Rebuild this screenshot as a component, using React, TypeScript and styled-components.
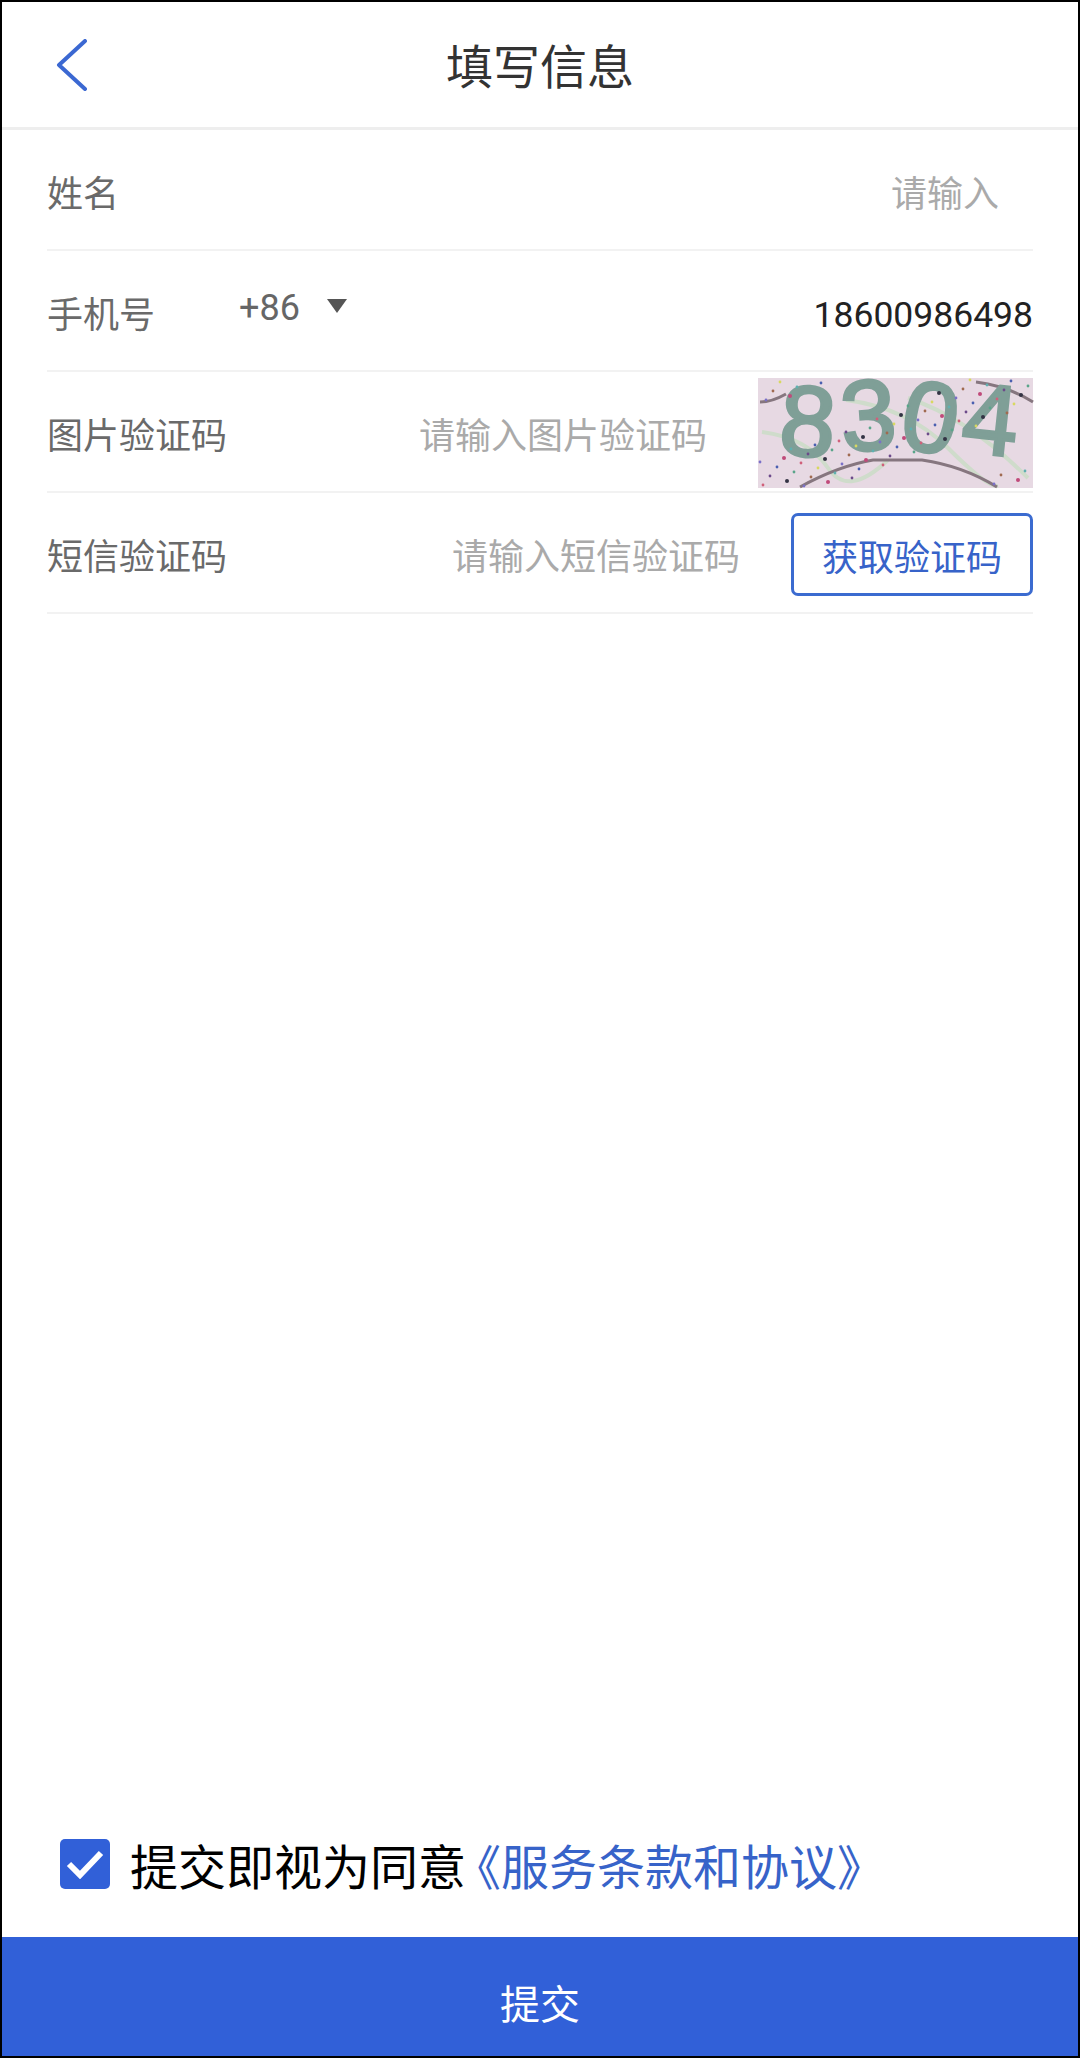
import React from "react";
import styled, { createGlobalStyle } from "styled-components";
import { FC } from "react";

const BLUE = "#3160d8";
const LINK = "#3763c9";

const GlobalStyle = createGlobalStyle`
  html, body {
    margin: 0;
    padding: 0;
    background: #fff;
  }
  * {
    box-sizing: border-box;
  }
`;

const Page = styled.div`
  width: 1080px;
  height: 2058px;
  border: 2px solid #000;
  background: #fff;
  display: flex;
  flex-direction: column;
  font-family: "Roboto", "Noto Sans CJK SC", sans-serif;
`;

const Header = styled.header`
  height: 128px;
  flex: none;
  display: grid;
  grid-template-columns: 1fr auto 1fr;
  align-items: center;
  padding: 0 53px;
  border-bottom: 3px solid #eeeeee;
`;

const BackButton = styled.button`
  border: none;
  background: none;
  padding: 0;
  width: 34px;
  height: 52px;
  cursor: pointer;
  svg {
    display: block;
  }
`;

const Title = styled.h1`
  margin: 0 0 3px;
  font-size: 47px;
  font-weight: 400;
  color: #333;
`;

const Form = styled.div`
  padding: 0 45px;
  display: flex;
  flex-direction: column;
`;

const Row = styled.div`
  height: 121px;
  flex: none;
  display: flex;
  align-items: center;
  border-bottom: 2px solid #f2f2f2;
  font-size: 36px;
`;

const Label = styled.span`
  color: #6a6a6a;
  padding-top: 3px;
  white-space: nowrap;
`;

const Code = styled.span`
  margin-left: 84px;
  display: flex;
  align-items: center;
  color: #666;
  font-size: 36px;
  margin-bottom: 6px;
`;

const Caret = styled.i`
  display: block;
  margin-left: 27px;
  margin-bottom: 4px;
  width: 0;
  height: 0;
  border-left: 10px solid transparent;
  border-right: 10px solid transparent;
  border-top: 14px solid #555;
`;

const Hint = styled.span<{ $gap: number }>`
  margin-left: auto;
  margin-right: ${props => props.$gap}px;
  padding-top: 3px;
  color: #aaaaaa;
  white-space: nowrap;
`;

const Phone = styled.span`
  margin-left: auto;
  padding-top: 8px;
  color: #222;
  font-size: 35.5px;
`;

const CaptchaBox = styled.svg`
  display: block;
  flex: none;
  width: 275px;
  height: 110px;
  margin-top: 3px;
  background: #e7d9e3;
  filter: blur(0.7px);
  overflow: visible;
`;

const SmsButton = styled.button`
  flex: none;
  width: 242px;
  height: 83px;
  margin-top: 4px;
  border: 3px solid #3b6bd0;
  border-radius: 7px;
  background: #fff;
  color: ${LINK};
  font-family: inherit;
  font-size: 36px;
  padding: 0;
`;

const Spacer = styled.div`
  flex: 1;
`;

const Agreement = styled.div`
  flex: none;
  height: 116px;
  padding: 0 0 30px 58px;
  display: flex;
  align-items: center;
  gap: 20px;
  font-size: 48px;
  color: #000;
`;

const CheckBox = styled.span`
  flex: none;
  width: 50px;
  height: 50px;
  border-radius: 5px;
  background: ${BLUE};
  display: flex;
  align-items: center;
  justify-content: center;
`;

const Terms = styled.a`
  margin-left: -13px;
  color: ${LINK};
  text-decoration: none;
`;

const Submit = styled.button`
  flex: none;
  height: 119px;
  border: none;
  background: ${BLUE};
  color: #fff;
  font-family: inherit;
  font-size: 40px;
  padding: 11px 0 0;
`;

const dotColors = ["#c04a7a", "#4a5fb0", "#6c4a8a", "#d0607a", "#5aa58a", "#333344", "#d8d860", "#a06a50", "#7a70c8", "#60b0b0"];

// noise for the captcha, same every render
const dots = Array.from({ length: 80 }, (_, i) => {
  const a = (i * 7919 + 31) % 272;
  const b = (i * 4523 + 17) % 108;
  return { x: a + 1, y: b + 1, r: i % 5 === 0 ? 2 : 1.4, fill: dotColors[i % dotColors.length] };
});

const digits = [
  { ch: "8", x: 50, y: 78, rot: 4 },
  { ch: "3", x: 110, y: 72, rot: -4 },
  { ch: "0", x: 173, y: 74, rot: 10 },
  { ch: "4", x: 233, y: 76, rot: 6 },
];

const Captcha: FC = () => (
  <CaptchaBox viewBox="0 0 275 110">
    <g fill="none" stroke="#cfdccb" strokeWidth="4">
      <path d="M4 54 Q50 60 70 90 T130 82" />
      <path d="M88 22 Q150 30 190 70 T240 108" />
      <path d="M150 20 Q210 40 270 100" />
    </g>
    <g fill="none" stroke="#86767f" strokeWidth="3">
      <path d="M42 109 Q80 88 115 82 L164 82 Q205 88 239 109" />
      <path d="M2 24 Q14 24 28 16" />
      <path d="M218 4 Q250 8 275 24" />
    </g>
    <g fill="#7f9f97" stroke="#7f9f97" strokeWidth="3" fontFamily="Liberation Sans, sans-serif" fontSize="100" textAnchor="middle">
      {digits.map(d => (
        <text key={d.ch} x={d.x} y={d.y} transform={`rotate(${d.rot} ${d.x} ${d.y - 36})`}>
          {d.ch}
        </text>
      ))}
    </g>
    {dots.map((d, i) => (
      <circle key={i} cx={d.x} cy={d.y} r={d.r} fill={d.fill} />
    ))}
  </CaptchaBox>
);

const App: FC = () => {
  return (
    <>
      <GlobalStyle />
      <Page>
        <Header>
          <BackButton type="button" aria-label="返回">
            <svg width="34" height="52" viewBox="0 0 34 52" fill="none">
              <path d="M30 2 L4 26 L30 50" stroke="#3b68d2" strokeWidth="4" strokeLinecap="round" strokeLinejoin="round" />
            </svg>
          </BackButton>
          <Title>填写信息</Title>
        </Header>
        <Form>
          <Row>
            <Label>姓名</Label>
            <Hint $gap={34}>请输入</Hint>
          </Row>
          <Row>
            <Label>手机号</Label>
            <Code>
              +86
              <Caret />
            </Code>
            <Phone>18600986498</Phone>
          </Row>
          <Row>
            <Label>图片验证码</Label>
            <Hint $gap={51}>请输入图片验证码</Hint>
            <Captcha />
          </Row>
          <Row>
            <Label>短信验证码</Label>
            <Hint $gap={51}>请输入短信验证码</Hint>
            <SmsButton type="button">获取验证码</SmsButton>
          </Row>
        </Form>
        <Spacer />
        <Agreement>
          <CheckBox>
            <svg width="38" height="30" viewBox="0 0 38 30" fill="none">
              <path d="M3 15 L14 26 L35 4" stroke="#fff" strokeWidth="6" />
            </svg>
          </CheckBox>
          <span>
            提交即视为同意<Terms>《服务条款和协议》</Terms>
          </span>
        </Agreement>
        <Submit type="button">提交</Submit>
      </Page>
    </>
  );
};

export default App;
